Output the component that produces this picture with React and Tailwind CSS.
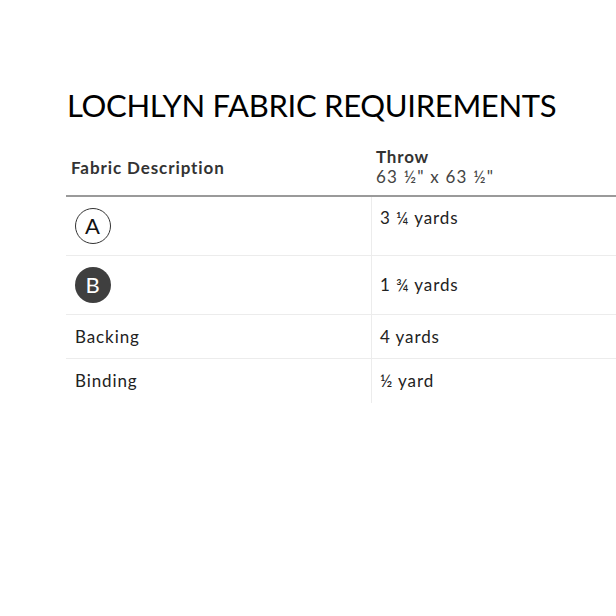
import React from 'react';

const rows = [
  { label: 'A', kind: 'outline', amount: '3 ¼ yards', tall: true },
  { label: 'B', kind: 'filled', amount: '1 ¾ yards', tall: true },
  { label: 'Backing', amount: '4 yards' },
  { label: 'Binding', amount: '½ yard', last: true },
];

function Badge({ letter, kind }) {
  if (kind === 'filled') {
    return (
      <div className="w-[36px] h-[36px] rounded-full bg-[#3f3f3f] text-white flex items-center justify-center text-[22px] leading-none">
        {letter}
      </div>
    );
  }
  return (
    <div className="w-[36px] h-[36px] rounded-full border border-[#333] text-[#111] flex items-center justify-center text-[22px] leading-none">
      {letter}
    </div>
  );
}

export default function App() {
  return (
    <div className="w-[616px] h-[616px] bg-white overflow-hidden font-['Lato',sans-serif] text-[#222]">
      <div className="pl-[67px] pt-[85px]">
        <h1 className="text-[31px] leading-[40px] font-normal tracking-[-0.3px] text-black">
          LOCHLYN FABRIC REQUIREMENTS
        </h1>
      </div>

      <div className="ml-[66px] mt-[15px] w-[550px]">
        {/* header */}
        <div className="grid grid-cols-[306px_1fr] h-[57px] border-b-2 border-[#9a9a9a]">
          <div className="flex items-center pl-[5px] text-[17px] font-bold tracking-[0.9px] text-[#333]">
            Fabric Description
          </div>
          <div className="flex flex-col justify-center pl-[4px] pb-[4px] text-[#333]">
            <span className="text-[17px] font-bold leading-[21px] tracking-[0.8px]">Throw</span>
            <span className="text-[17px] leading-[19px] tracking-[1.2px] text-[#444]">63 ½" x 63 ½"</span>
          </div>
        </div>

        {rows.map((r) => (
          <div
            key={r.label}
            className={`grid grid-cols-[306px_1fr] ${r.last ? '' : 'border-b border-[#ececec]'} ${r.tall ? 'h-[59px]' : 'h-[44px]'}`}
          >
            <div className="flex items-center pl-[9px] text-[17px] tracking-[0.9px] text-[#222] border-r border-[#ececec]">
              {r.kind ? <Badge letter={r.label} kind={r.kind} /> : r.label}
            </div>
            <div
              className={`pl-[8px] text-[17px] tracking-[0.9px] text-[#222] flex ${
                r.kind === 'outline' ? 'items-start pt-[8px]' : 'items-center'
              }`}
            >
              {r.amount}
            </div>
          </div>
        ))}
      </div>
    </div>
  );
}
